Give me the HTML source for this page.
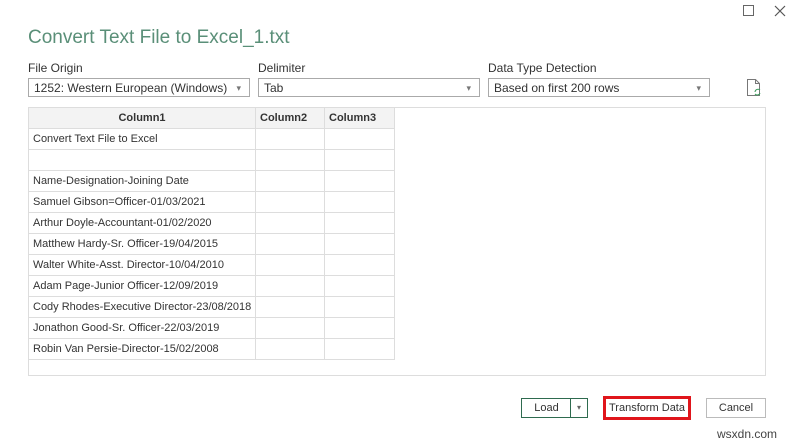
<!DOCTYPE html>
<html><head><style>
body{margin:0;width:791px;height:443px;background:#fff;font-family:"Liberation Sans",sans-serif;position:relative;overflow:hidden;color:#333}
.a{position:absolute}
.lbl{font-size:12px;color:#333}
.dd{border:1px solid #aaa;height:19px;box-sizing:border-box;font-size:12px;line-height:18px;padding-left:5px;color:#333}
.dd:after{content:"▾";position:absolute;right:8px;top:0;font-size:9px;color:#777}
table{border-collapse:collapse;font-size:11px;table-layout:fixed}
td,th{border:1px solid #ddd;height:20px;padding:0 4px;white-space:nowrap;overflow:hidden}
th{background:#f3f3f3;font-weight:bold;text-align:left;color:#333}
.btn{border:1px solid #bbb;height:20px;box-sizing:border-box;font-size:11px;text-align:center;line-height:18px}
</style></head><body>
<div class="a" style="left:743px;top:5px;width:9px;height:9px;border:1px solid #666"></div>
<svg class="a" style="left:774px;top:5px" width="12" height="12"><path d="M1 1L11 11M11 1L1 11" stroke="#555" stroke-width="1.2"/></svg>
<div class="a" style="left:28px;top:27px;font-size:19px;color:#5a8f78">Convert Text File to Excel_1.txt</div>
<div class="a lbl" style="left:28px;top:61px">File Origin</div>
<div class="a lbl" style="left:258px;top:61px">Delimiter</div>
<div class="a lbl" style="left:488px;top:61px">Data Type Detection</div>
<div class="a dd" style="left:28px;top:78px;width:222px">1252: Western European (Windows)</div>
<div class="a dd" style="left:258px;top:78px;width:222px">Tab</div>
<div class="a dd" style="left:488px;top:78px;width:222px">Based on first 200 rows</div>
<svg class="a" style="left:746px;top:79px" width="16" height="18"><path d="M1.5 .5h8l4 4v12h-12z M9.5 .5v4h4" fill="none" stroke="#777"/><path d="M9 13a3 3 0 0 1 5-2M14 14a3 3 0 0 1-5 1" stroke="#3a9a5a" fill="none"/></svg>
<div class="a" style="left:28px;top:107px;width:738px;height:269px;border:1px solid #ddd;box-sizing:border-box"></div>
<table class="a" style="left:28px;top:107px;width:367px">
<colgroup><col style="width:227px"><col style="width:69px"><col style="width:70px"></colgroup>
<tr><th style="text-align:center">Column1</th><th>Column2</th><th>Column3</th></tr>
<tr><td>Convert Text File to Excel</td><td></td><td></td></tr>
<tr><td></td><td></td><td></td></tr>
<tr><td>Name-Designation-Joining Date</td><td></td><td></td></tr>
<tr><td>Samuel Gibson=Officer-01/03/2021</td><td></td><td></td></tr>
<tr><td>Arthur Doyle-Accountant-01/02/2020</td><td></td><td></td></tr>
<tr><td>Matthew Hardy-Sr. Officer-19/04/2015</td><td></td><td></td></tr>
<tr><td>Walter White-Asst. Director-10/04/2010</td><td></td><td></td></tr>
<tr><td>Adam Page-Junior Officer-12/09/2019</td><td></td><td></td></tr>
<tr><td>Cody Rhodes-Executive Director-23/08/2018</td><td></td><td></td></tr>
<tr><td>Jonathon Good-Sr. Officer-22/03/2019</td><td></td><td></td></tr>
<tr><td>Robin Van Persie-Director-15/02/2008</td><td></td><td></td></tr>
</table>
<div class="a btn" style="left:521px;top:398px;width:50px;border-color:#2e6b4f;border-right:none">Load</div>
<div class="a btn" style="left:570px;top:398px;width:18px;border-color:#2e6b4f;font-size:8px;color:#666">▾</div>
<div class="a btn" style="left:603px;top:396px;width:88px;height:24px;border:3px solid #e0151b;line-height:18px">Transform Data</div>
<div class="a btn" style="left:706px;top:398px;width:60px">Cancel</div>
<div class="a" style="left:717px;top:427px;font-size:12px;color:#444">wsxdn.com</div>
</body></html>
